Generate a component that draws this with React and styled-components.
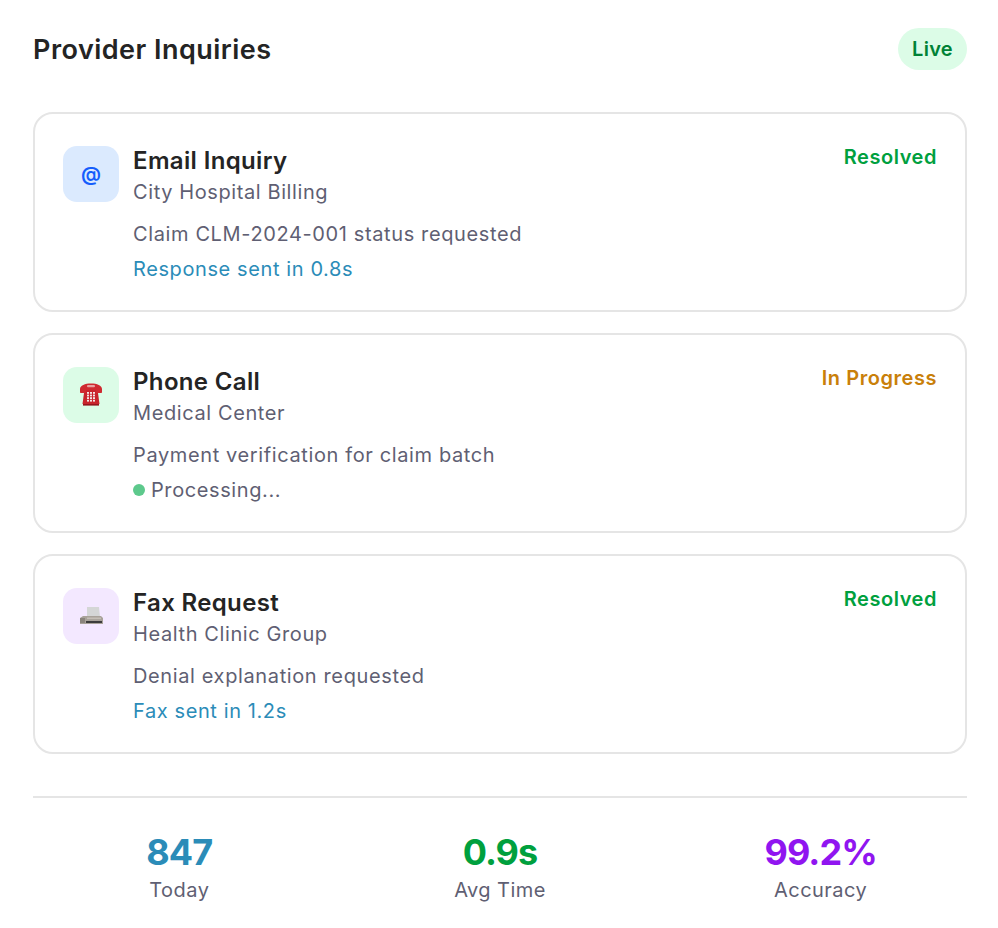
import styled, { createGlobalStyle } from 'styled-components';

const GlobalStyle = createGlobalStyle`
  body {
    margin: 0;
    background: #ffffff;
    font-family: Inter, "Liberation Sans", sans-serif;
  }
`;

const Panel = styled.div`
  width: 998px;
  height: 928px;
  box-sizing: border-box;
  padding: 28px 31px 0 33px;
  background: #ffffff;
`;

const Header = styled.div`
  display: flex;
  align-items: center;
  justify-content: space-between;
  height: 42px;
  margin-bottom: 42px;
`;

const Title = styled.h2`
  margin: 0;
  font-size: 27px;
  font-weight: 600;
  letter-spacing: 0.47px;
  color: #242424;
`;

const LiveBadge = styled.span`
  display: flex;
  align-items: center;
  height: 42px;
  padding: 0 14px;
  border-radius: 21px;
  background: #dcfce7;
  color: #008236;
  font-size: 20px;
  font-weight: 600;
  letter-spacing: 0.3px;
`;

const List = styled.div`
  display: flex;
  flex-direction: column;
  gap: 21px;
`;

const Card = styled.div`
  display: flex;
  box-sizing: border-box;
  height: 200px;
  padding: 31px 28px 0 28px;
  border: 2px solid #e5e5e5;
  border-radius: 20px;
  background: #ffffff;
`;

const IconBox = styled.div`
  flex: none;
  display: flex;
  align-items: center;
  justify-content: center;
  width: 56px;
  height: 56px;
  margin-top: 1px;
  margin-right: 14px;
  border-radius: 14px;
  background: ${(p) => p.$bg};
  color: #155dfc;
  font-size: 20px;
  font-weight: 600;
`;

const Body = styled.div`
  flex: 1;
  display: flex;
  flex-direction: column;
`;

const Name = styled.div`
  font-size: 24px;
  font-weight: 600;
  line-height: 31px;
  letter-spacing: 0.35px;
  color: #242424;
`;

const Org = styled.div`
  margin-top: 2px;
  font-size: 20px;
  line-height: 28px;
  letter-spacing: 0.6px;
  color: #5f5f73;
`;

const Detail = styled.div`
  margin-top: 14px;
  font-size: 20px;
  line-height: 28px;
  letter-spacing: 0.62px;
  color: #5f5f73;
`;

const Note = styled.div`
  display: flex;
  align-items: center;
  gap: 6px;
  margin-top: 7px;
  font-size: 20px;
  line-height: 28px;
  letter-spacing: 0.6px;
  color: ${(p) => p.$color};
`;

const Dot = styled.span`
  width: 12px;
  height: 12px;
  border-radius: 50%;
  background: #5dc98c;
`;

const Status = styled.div`
  font-size: 20px;
  font-weight: 600;
  line-height: 24px;
  letter-spacing: 0.55px;
  color: ${(p) => p.$color};
`;

const Stats = styled.div`
  display: grid;
  grid-template-columns: repeat(3, 1fr);
  column-gap: 28px;
  margin-top: 42px;
  padding-top: 32px;
  border-top: 2px solid #e5e5e5;
`;

const Stat = styled.div`
  display: flex;
  flex-direction: column;
  align-items: center;
`;

const StatValue = styled.div`
  font-size: 36px;
  font-weight: 700;
  line-height: 44px;
  letter-spacing: -0.9px;
  color: ${(p) => p.$color};
`;

const StatLabel = styled.div`
  margin-top: 2px;
  font-size: 20px;
  line-height: 28px;
  letter-spacing: 0.45px;
  color: #5f5f73;
`;

const PhoneIcon = () => (
  <svg width="24" height="24" viewBox="0 0 24 24">
    <path d="M5 10l2-3h10l2 3 1.5 11h-17z" fill="#c8242c" />
    <path d="M1 9V6C1 2.5 6 .5 12 .5S23 2.5 23 6v3c0 .6-.4 1-1 1h-4c-.6 0-1-.4-1-1V7H7v2c0 .6-.4 1-1 1H2c-.6 0-1-.4-1-1z" fill="#cf2a30" />
    <rect x="8" y="2" width="8" height="2.2" rx="1" fill="#e8a0a0" />
    <rect x="4" y="21" width="16" height="1.6" fill="#96141c" />
    <g fill="#f4e4e4">
      {[8, 11, 14].map((x) =>
        [9, 11.6, 14.2, 16.8].map((y) => <rect key={`${x}-${y}`} x={x} y={y} width="2" height="1.8" />)
      )}
    </g>
  </svg>
);

const FaxIcon = () => (
  <svg width="24" height="24" viewBox="0 0 24 24">
    <path d="M8 3h12l1 10H8z" fill="#d4d6d6" />
    <path d="M1 14l3-2h18l2 2v6H1z" fill="#a8a29a" />
    <rect x="1" y="14" width="5" height="5" fill="#8a847c" />
    <rect x="7" y="17" width="16" height="2" fill="#3c3c3c" />
    <rect x="8" y="13.5" width="14" height="1.6" fill="#c4beb6" />
  </svg>
);

const inquiries = [
  {
    name: 'Email Inquiry', org: 'City Hospital Billing', detail: 'Claim CLM-2024-001 status requested',
    note: 'Response sent in 0.8s', status: 'Resolved', statusColor: '#00a03e', bg: '#dbeafe', icon: '@',
  },
  {
    name: 'Phone Call', org: 'Medical Center', detail: 'Payment verification for claim batch',
    note: 'Processing...', status: 'In Progress', statusColor: '#c97f0a', bg: '#dcfce7', icon: <PhoneIcon />, busy: true,
  },
  {
    name: 'Fax Request', org: 'Health Clinic Group', detail: 'Denial explanation requested',
    note: 'Fax sent in 1.2s', status: 'Resolved', statusColor: '#00a03e', bg: '#f3e8ff', icon: <FaxIcon />,
  },
];

const stats = [
  { value: '847', label: 'Today', color: '#2b8cb8' },
  { value: '0.9s', label: 'Avg Time', color: '#00a03e' },
  { value: '99.2%', label: 'Accuracy', color: '#9015f0' },
];

const App = () => {
  return (
    <Panel>
      <GlobalStyle />
      <Header>
        <Title>Provider Inquiries</Title>
        <LiveBadge>Live</LiveBadge>
      </Header>
      <List>
        {inquiries.map((item) => (
          <Card key={item.name}>
            <IconBox $bg={item.bg}>{item.icon}</IconBox>
            <Body>
              <Name>{item.name}</Name>
              <Org>{item.org}</Org>
              <Detail>{item.detail}</Detail>
              <Note $color={item.busy ? '#5f5f73' : '#2b8cb8'}>
                {item.busy && <Dot />}
                {item.note}
              </Note>
            </Body>
            <Status $color={item.statusColor}>{item.status}</Status>
          </Card>
        ))}
      </List>
      <Stats>
        {stats.map((s) => (
          <Stat key={s.label}>
            <StatValue $color={s.color}>{s.value}</StatValue>
            <StatLabel>{s.label}</StatLabel>
          </Stat>
        ))}
      </Stats>
    </Panel>
  );
};

export default App;
